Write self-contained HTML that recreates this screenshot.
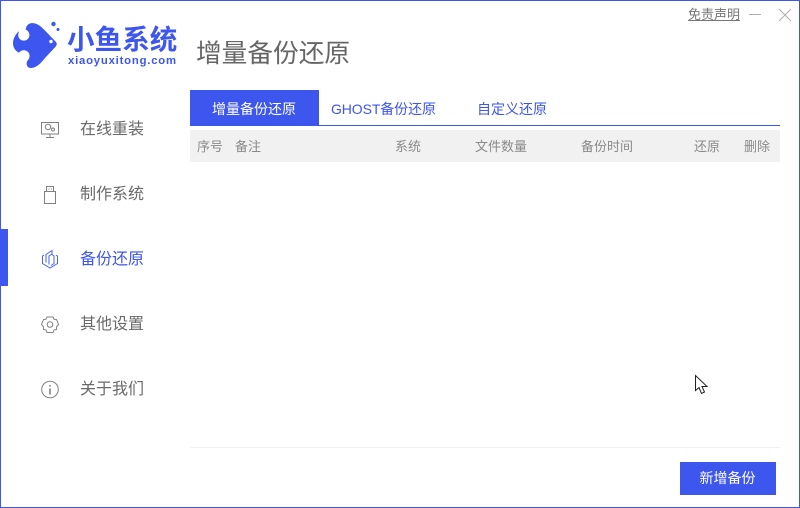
<!DOCTYPE html>
<html lang="zh">
<head>
<meta charset="utf-8">
<style>
html,body{margin:0;padding:0;background:#fff}
body{width:800px;height:508px;position:relative;overflow:hidden;font-family:"Liberation Sans","Noto Sans CJK SC",sans-serif;color:#666}
.a{position:absolute;white-space:nowrap;line-height:1}
.frame{position:absolute;left:0;top:0;width:798px;height:506px;border:1px solid #3c56ee}
.nav{font-size:16px;left:80px;color:#6a6a6a}
.th{font-size:13px;top:140px;color:#8a8a8a}
.tab{font-size:14px;top:102px;color:#3c56ee}
svg{position:absolute;overflow:visible}
</style>
</head>
<body>
<div class="frame"></div>

<svg style="left:0;top:0" width="70" height="80" viewBox="0 0 70 80">
<path fill="#3c56ee" d="M26.500 26.500C28 23.500 31 22.800 34 23.200C38 23.800 41 26.500 44 29.500L55.500 41.500Q58 44 55.500 46.800L45 58C41 63 36.500 68 31 68C27 68 25.500 64 27.500 60.500L24 56L18.500 52.500C15 50.500 13 47 13 43.500C13 39 15 35 18.500 31.500L24 35Z"/>
<circle cx="23.800" cy="35" r="5.600" fill="#fff"/>
<circle cx="23.800" cy="56" r="5.800" fill="#fff"/>
<circle cx="51" cy="41.500" r="1.700" fill="#fff"/>
<circle cx="53.500" cy="24" r="2.200" fill="#3c56ee"/>
<circle cx="58" cy="29.500" r="1.500" fill="#3c56ee"/>
</svg>
<div class="a" style="left:67px;top:26px;font-size:27.500px;font-weight:bold;color:#3c56ee;letter-spacing:.1px">小鱼系统</div>
<div class="a" style="left:68px;top:56px;font-size:11.300px;font-weight:bold;color:#3c56ee;letter-spacing:.8px">xiaoyuxitong.com</div>

<div class="a" style="left:196px;top:42px;font-size:25.700px;color:#666">增量备份还原</div>

<div class="a" style="left:688px;top:8px;font-size:13px;color:#777;text-decoration:underline">免责声明</div>
<svg style="left:749px;top:8px" width="45" height="14" viewBox="0 0 45 14">
<path d="M0 6.500H12" stroke="#b0b0b0" fill="none"/>
<path d="M30 1L42 13M42 1L30 13" stroke="#b0b0b0" fill="none"/>
</svg>

<!-- Sidebar -->
<div class="a" style="left:0;top:229px;width:8px;height:57px;background:#3c56ee"></div>

<svg style="left:40px;top:121px" width="20" height="18" viewBox="0 0 20 18" fill="none" stroke="#808080">
<rect x="1.500" y="1.500" width="17" height="11.500"/>
<circle cx="8" cy="6" r="2.700"/>
<circle cx="13" cy="8.500" r="1.500"/>
<path d="M10 13V16.500M6 16.500H14"/>
</svg>
<div class="a nav" style="top:122px">在线重装</div>

<svg style="left:43px;top:185px" width="14" height="20" viewBox="0 0 14 20" fill="none" stroke="#808080">
<path d="M3.500 1.500H10.500V6.500H3.500Z"/>
<path d="M1.500 6.500H12.500V18.500H1.500Z"/>
<path d="M6 3.500V4.500M8.500 3.500V4.500"/>
</svg>
<div class="a nav" style="top:187px">制作系统</div>

<svg style="left:41px;top:249px" width="19" height="20" viewBox="0 0 19 20" fill="none" stroke="#4a62ee">
<path d="M3 6L1.500 7V14.500L9 19L16.500 14.500V7L15 6"/>
<path d="M5 13.500V5.500L11 1.500V5L8 7V15.500"/>
<path d="M11 5.500L13 7V14.500L10 16.500"/>
</svg>
<div class="a nav" style="top:252px;color:#3c56ee">备份还原</div>

<svg style="left:41px;top:315px" width="18" height="19" viewBox="0 0 18 19" fill="none" stroke="#808080">
<path d="M6 2H12L13 4.200L15.500 4.500L17.500 9.500L15.700 11.500L15.500 14.500L13 15L12 17.500H6L5 15L2.500 14.500L2.300 11.500L.5 9.500L2.500 4.500L5 4.200Z" stroke-linejoin="round"/>
<circle cx="9" cy="9.500" r="2.800"/>
</svg>
<div class="a nav" style="top:317px">其他设置</div>

<svg style="left:41px;top:380px" width="18" height="20" viewBox="0 0 18 20" fill="none" stroke="#808080">
<circle cx="9" cy="9.500" r="8.300"/>
<path d="M9 8.500V14.500" stroke-width="1.600"/>
<path d="M9 5V6.500" stroke-width="1.600"/>
</svg>
<div class="a nav" style="top:382px">关于我们</div>

<!-- Tabs -->
<div class="a" style="left:190px;top:90px;width:129px;height:35px;background:#3c56ee"></div>
<div class="a" style="left:190px;top:125px;width:590px;height:1px;background:#3c56ee"></div>
<div class="a tab" style="left:212px;color:#fff">增量备份还原</div>
<div class="a tab" style="left:331px;letter-spacing:-.1px">GHOST备份还原</div>
<div class="a tab" style="left:477px">自定义还原</div>

<!-- Table header -->
<div class="a" style="left:190px;top:130px;width:590px;height:32px;background:#f1f1f1"></div>
<div class="a th" style="left:197px">序号</div>
<div class="a th" style="left:235px">备注</div>
<div class="a th" style="left:395px">系统</div>
<div class="a th" style="left:475px">文件数量</div>
<div class="a th" style="left:581px">备份时间</div>
<div class="a th" style="left:694px">还原</div>
<div class="a th" style="left:744px">删除</div>

<!-- Cursor -->
<svg style="left:695px;top:375px" width="14" height="20" viewBox="0 0 14 20">
<path d="M.5 .5V15.500L4 12.500L6.500 18.500L9.500 17L7 11.500H12Z" fill="#fff" stroke="#222" stroke-width="1"/>
</svg>

<!-- Footer -->
<div class="a" style="left:190px;top:447px;width:590px;height:1px;background:#f0f0f0"></div>
<div class="a" style="left:680px;top:462px;width:96px;height:33px;background:#3c56ee;color:#fff;font-size:14px;line-height:33px;text-align:center;text-indent:-1px">新增备份</div>
</body>
</html>
